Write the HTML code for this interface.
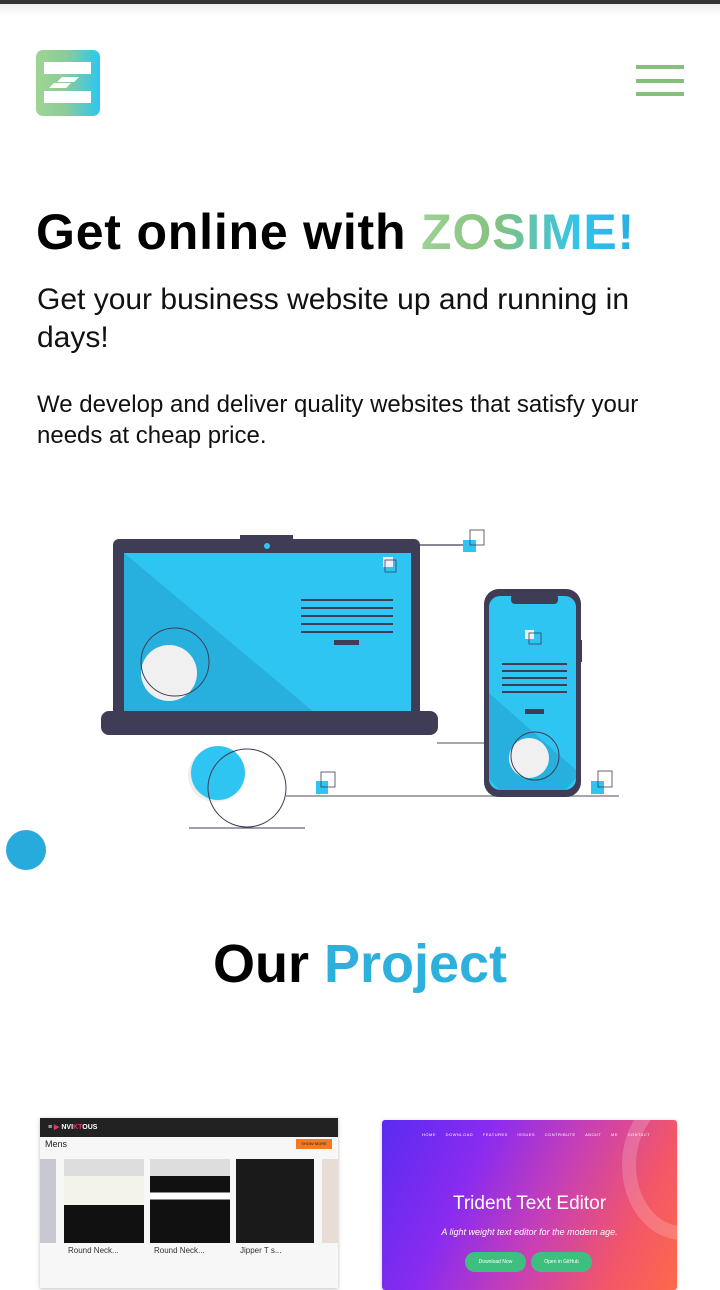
<!DOCTYPE html>
<html><head><meta charset="utf-8"><style>
*{margin:0;padding:0;box-sizing:border-box}
body{width:720px;height:1282px;overflow:hidden;background:#fff;font-family:"Liberation Sans",sans-serif;position:relative}
.abs{position:absolute}
.grad{background:linear-gradient(90deg,#9dd294,#84c27f 35%,#2fc4ef 75%,#29aee0);-webkit-background-clip:text;background-clip:text;color:transparent}
</style></head><body>
<div class="abs" style="left:0;top:0;width:720px;height:4px;background:#333"></div>
<div class="abs" style="left:0;top:4px;width:720px;height:12px;background:linear-gradient(#eee,#fff)"></div>
<svg class="abs" style="left:36px;top:50px" width="64" height="66" viewBox="0 0 64 66">
<defs><linearGradient id="lg" x1="0" x2="1"><stop offset="0" stop-color="#9ed593"/><stop offset="0.45" stop-color="#8ccc98"/><stop offset="1" stop-color="#2cc7f0"/></linearGradient></defs>
<rect x="0" y="0" width="64" height="66" rx="7" fill="url(#lg)"/>
<rect x="8" y="12" width="47" height="12" fill="#fff"/>
<rect x="8" y="41" width="47" height="12" fill="#fff"/>
<polygon points="26,27 43,27 38,32 21,32" fill="#fff"/>
<polygon points="18,33 35,33 30,38 13,38" fill="#fff"/>
</svg>
<div class="abs" style="left:636px;top:65px;width:48px;height:4px;background:#86bf7b"></div>
<div class="abs" style="left:636px;top:79px;width:48px;height:4px;background:#86bf7b"></div>
<div class="abs" style="left:636px;top:92px;width:48px;height:4px;background:#86bf7b"></div>

<div class="abs" style="left:36px;top:200px;font-size:50px;font-weight:bold;letter-spacing:0.8px;white-space:nowrap;line-height:64px;color:#000">Get online with <span class="grad">ZOSIME!</span></div>
<div class="abs" style="left:37px;top:281px;width:610px;font-size:30px;line-height:38px;color:#111">Get your business website up and running in days!</div>
<div class="abs" style="left:37px;top:389px;width:640px;font-size:24px;line-height:31px;color:#111">We develop and deliver quality websites that satisfy your needs at cheap price.</div>

<svg class="abs" style="left:0;top:520px" width="720" height="330" viewBox="0 520 720 330">
<line x1="420" y1="545" x2="470" y2="545" stroke="#3f3d56" stroke-width="1.2"/>
<line x1="437" y1="743" x2="486" y2="743" stroke="#8a8896" stroke-width="1.5"/>
<line x1="286" y1="796" x2="619" y2="796" stroke="#8a8896" stroke-width="1.5"/>
<line x1="189" y1="828" x2="305" y2="828" stroke="#3f3d56" stroke-width="1"/>
<rect x="240" y="535" width="53" height="8" fill="#3f3d56"/>
<rect x="113" y="539" width="307" height="180" rx="6" fill="#3f3d56"/>
<rect x="124" y="553" width="287" height="165" fill="#2ec5f2"/>
<polygon points="124,553 321,718 124,718" fill="#27afde"/>
<circle cx="267" cy="546" r="3" fill="#2ec5f2"/>
<circle cx="169" cy="673" r="28" fill="#f0f0f0"/>
<circle cx="175" cy="662" r="34" fill="none" stroke="#3f3d56" stroke-width="1"/>
<g stroke="#3f3d56" stroke-width="2"><line x1="301" y1="600" x2="393" y2="600"/><line x1="301" y1="608" x2="393" y2="608"/><line x1="301" y1="616" x2="393" y2="616"/><line x1="301" y1="624" x2="393" y2="624"/><line x1="301" y1="632" x2="393" y2="632"/></g>
<rect x="334" y="640" width="25" height="5" fill="#3f3d56"/>
<rect x="383" y="557" width="10" height="10" fill="#f0f0f0"/>
<rect x="385" y="560" width="11" height="12" fill="none" stroke="#3f3d56" stroke-width="0.8"/>
<rect x="101" y="711" width="337" height="24" rx="8" fill="#3f3d56"/>
<rect x="463" y="540" width="13" height="12" fill="#2ec5f2"/>
<rect x="470" y="530" width="14" height="15" fill="none" stroke="#3f3d56" stroke-width="0.8"/>
<rect x="484" y="589" width="97" height="208" rx="15" fill="#3f3d56"/>
<rect x="579" y="640" width="3" height="22" fill="#3f3d56"/>
<rect x="489" y="596" width="87" height="194" rx="11" fill="#2ec5f2"/>
<polygon points="489,693 576,770 576,778 565,790 500,790 489,779" fill="#27afde"/>
<rect x="511" y="594" width="47" height="10" rx="4" fill="#3f3d56"/>
<g stroke="#3f3d56" stroke-width="2"><line x1="502" y1="664" x2="567" y2="664"/><line x1="502" y1="671" x2="567" y2="671"/><line x1="502" y1="678" x2="567" y2="678"/><line x1="502" y1="685" x2="567" y2="685"/><line x1="502" y1="692" x2="567" y2="692"/></g>
<rect x="525" y="709" width="19" height="5" fill="#3f3d56"/>
<rect x="525" y="630" width="9" height="9" fill="#f0f0f0"/>
<rect x="529" y="633" width="12" height="11" fill="none" stroke="#3f3d56" stroke-width="0.8"/>
<circle cx="529" cy="758" r="20" fill="#f0f0f0"/>
<circle cx="535" cy="756" r="24" fill="none" stroke="#3f3d56" stroke-width="1"/>
<circle cx="215" cy="775" r="27" fill="#eee"/>
<circle cx="218" cy="773" r="27" fill="#2ec5f2"/>
<circle cx="247" cy="788" r="39" fill="none" stroke="#3f3d56" stroke-width="1"/>
<rect x="316" y="781" width="12" height="13" fill="#2ec5f2"/>
<rect x="321" y="772" width="14" height="15" fill="none" stroke="#3f3d56" stroke-width="0.8"/>
<rect x="591" y="781" width="13" height="13" fill="#2ec5f2"/>
<rect x="598" y="771" width="14" height="16" fill="none" stroke="#3f3d56" stroke-width="0.8"/>
</svg>
<div class="abs" style="left:6px;top:830px;width:40px;height:40px;border-radius:50%;background:#27aadc"></div>

<div class="abs" style="left:0;top:928px;width:720px;text-align:center;font-size:54px;font-weight:bold;line-height:72px;color:#000">Our <span style="color:#2eb0dc">Project</span></div>

<div class="abs" style="left:40px;top:1118px;width:298px;height:170px;background:#f7f7f7;box-shadow:0 1px 4px rgba(0,0,0,.25);overflow:hidden">
<div style="height:19px;background:#222;color:#fff;font-size:7px;font-weight:bold;line-height:19px;padding-left:8px">≡ <span style="color:#e2336b">▶</span> NVI<span style="color:#e2336b">KT</span>OUS</div>
<div style="position:absolute;left:5px;top:21px;font-size:9px;color:#222">Mens</div>
<div style="position:absolute;left:256px;top:21px;width:36px;height:10px;background:#f37a1f;font-size:4px;color:#222;text-align:center;line-height:10px">SHOW MORE</div>
<div style="position:absolute;left:-10px;top:41px;width:26px;height:84px;background:#c8c8d0"></div>
<div style="position:absolute;left:24px;top:41px;width:80px;height:84px;background:linear-gradient(#ddd 0,#ddd 20%,#f3f3ea 20%,#f3f3ea 55%,#111 55%)"></div>
<div style="position:absolute;left:110px;top:41px;width:80px;height:84px;background:linear-gradient(#ddd 0,#ddd 20%,#111 20%,#111 40%,#fff 40%,#fff 48%,#111 48%)"></div>
<div style="position:absolute;left:196px;top:41px;width:78px;height:84px;background:#1a1a1a"></div>
<div style="position:absolute;left:282px;top:41px;width:20px;height:84px;background:#e8ddd5"></div>
<div style="position:absolute;left:28px;top:128px;font-size:8px;color:#333">Round Neck...</div>
<div style="position:absolute;left:114px;top:128px;font-size:8px;color:#333">Round Neck...</div>
<div style="position:absolute;left:200px;top:128px;font-size:8px;color:#333">Jipper T s...</div>
</div>
<div class="abs" style="left:382px;top:1120px;width:295px;height:170px;border-radius:3px;background:linear-gradient(115deg,#5a2bf0 0%,#8a2bf0 30%,#c63fb6 55%,#f2566a 80%,#fc6a4a 100%);overflow:hidden;box-shadow:0 1px 4px rgba(0,0,0,.2)">
<div style="position:absolute;left:240px;top:-30px;width:120px;height:150px;border-radius:50%;border:14px solid rgba(255,255,255,.18)"></div>
<div style="position:absolute;left:40px;top:12px;font-size:4px;color:#fff;letter-spacing:0.5px;word-spacing:8px;white-space:nowrap">HOME DOWNLOAD FEATURES ISSUES CONTRIBUTE ABOUT&nbsp;ME CONTACT</div>
<div style="position:absolute;left:0;top:73px;width:295px;text-align:center;font-size:19px;color:#fff">Trident Text Editor</div>
<div style="position:absolute;left:0;top:107px;width:295px;text-align:center;font-size:9px;font-style:italic;color:#fff">A light weight text editor for the modern age.</div>
<div style="position:absolute;left:83px;top:132px;width:61px;height:20px;border-radius:10px;background:#3fbf7f;color:#fff;font-size:5px;text-align:center;line-height:20px">Download Now</div>
<div style="position:absolute;left:149px;top:132px;width:61px;height:20px;border-radius:10px;background:#3fbf7f;color:#fff;font-size:5px;text-align:center;line-height:20px">Open in GitHub</div>
</div>
</body></html>
